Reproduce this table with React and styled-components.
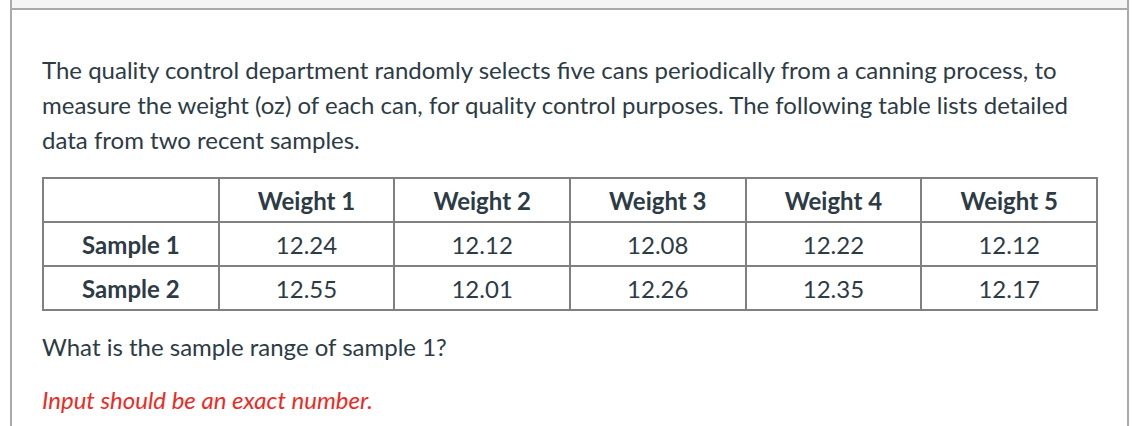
import React from "react";
import styled, { createGlobalStyle } from "styled-components";

const GlobalStyle = createGlobalStyle`
  body {
    margin: 0;
    background: #ffffff;
    font-family: "Lato", "Noto Sans", sans-serif;
  }
`;

const Frame = styled.div`
  margin-left: 10px;
  width: 1119px;
  height: 426px;
  box-sizing: border-box;
  border-left: 2px solid #aaaaaa;
  border-right: 2px solid #aaaaaa;
  overflow: hidden;
`;

const HeaderStrip = styled.div`
  height: 8px;
  background: #f5f5f5;
  border-bottom: 2px solid #aaaaaa;
`;

const Content = styled.div`
  padding: 42px 29px 0 30px;
  color: #2d3b45;
  font-size: 24px;
`;

const Paragraph = styled.p`
  margin: 0;
  line-height: 35px;
`;

const Table = styled.table`
  width: 1056px;
  margin-top: 20px;
  table-layout: fixed;
  border-collapse: separate;
  border-spacing: 0;
  border-top: 2px solid #808080;
  border-left: 2px solid #808080;
  font-size: 24px;
  color: #2d3b45;
`;

const Cell = styled.td`
  height: 42px;
  padding: 0;
  box-sizing: content-box;
  border-right: 2px solid #808080;
  border-bottom: 2px solid #808080;
  text-align: center;
  vertical-align: middle;
  font-weight: ${(props) => (props.$bold ? 700 : 400)};
`;

const Question = styled.p`
  margin: 18px 0 0 0;
  line-height: 35px;
`;

const Hint = styled.p`
  margin: 18px 0 0 0;
  line-height: 35px;
  font-style: italic;
  color: #ee2a24;
`;

const samples = [
  { name: "Sample 1", values: ["12.24", "12.12", "12.08", "12.22", "12.12"] },
  { name: "Sample 2", values: ["12.55", "12.01", "12.26", "12.35", "12.17"] },
];

function App() {
  return (
    <>
      <GlobalStyle />
      <Frame>
        <HeaderStrip />
        <Content>
          <Paragraph>
            The quality control department randomly selects five cans
            periodically from a canning process, to measure the weight (oz) of
            each can, for quality control purposes. The following table lists
            detailed data from two recent samples.
          </Paragraph>
          <Table>
            <tbody>
              <tr>
                <Cell />
                {[1, 2, 3, 4, 5].map((n) => (
                  <Cell as="th" $bold key={n}>
                    Weight {n}
                  </Cell>
                ))}
              </tr>
              {samples.map((s) => (
                <tr key={s.name}>
                  <Cell as="th" $bold>
                    {s.name}
                  </Cell>
                  {s.values.map((v, i) => (
                    <Cell key={i}>{v}</Cell>
                  ))}
                </tr>
              ))}
            </tbody>
          </Table>
          <Question>What is the sample range of sample 1?</Question>
          <Hint>Input should be an exact number.</Hint>
        </Content>
      </Frame>
    </>
  );
}

export default App;
